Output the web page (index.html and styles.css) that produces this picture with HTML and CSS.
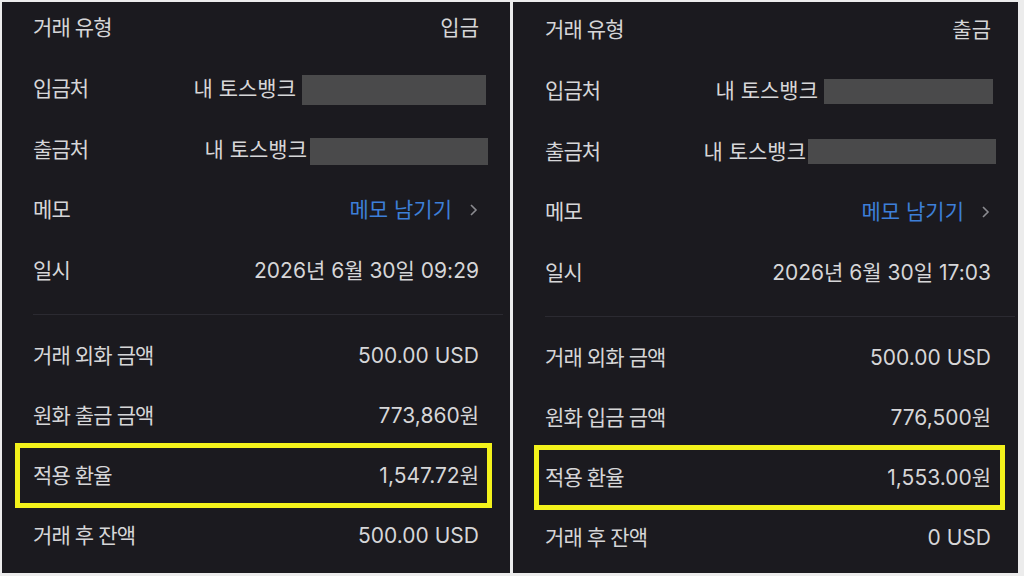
FILE: index.html
```html
<!DOCTYPE html>
<html lang="ko">
<head>
    <meta charset="UTF-8">
    <meta name="viewport" content="width=device-width, initial-scale=1.0">
    <title>거래 상세</title>
    <link rel="stylesheet" href="styles.css">
</head>
<body>
    <div class="sheet">
        <!-- 입금 거래 -->
        <section class="panel panel-in">
            <div class="details">
                <div class="row">
                    <span class="label">거래 유형</span>
                    <span class="value">입금</span>
                </div>
                <div class="row">
                    <span class="label">입금처</span>
                    <span class="value">내 토스뱅크<span class="mask mask-in-to"></span></span>
                </div>
                <div class="row">
                    <span class="label">출금처</span>
                    <span class="value">내 토스뱅크<span class="mask mask-in-from"></span></span>
                </div>
                <div class="row">
                    <span class="label">메모</span>
                    <span class="value memo">메모 남기기
                        <svg class="chevron" width="9" height="14" viewBox="0 0 9 14"><polyline points="2,2 7,7 2,12" /></svg>
                    </span>
                </div>
                <div class="row">
                    <span class="label">일시</span>
                    <span class="value">2026년 6월 30일 09:29</span>
                </div>
            </div>
            <hr class="divider">
            <div class="amounts">
                <div class="row">
                    <span class="label">거래 외화 금액</span>
                    <span class="value">500.00 USD</span>
                </div>
                <div class="row">
                    <span class="label">원화 출금 금액</span>
                    <span class="value">773,860원</span>
                </div>
                <div class="row highlight">
                    <span class="label">적용 환율</span>
                    <span class="value">1,547.72원</span>
                </div>
                <div class="row">
                    <span class="label">거래 후 잔액</span>
                    <span class="value">500.00 USD</span>
                </div>
            </div>
        </section>

        <!-- 출금 거래 -->
        <section class="panel panel-out">
            <div class="details">
                <div class="row">
                    <span class="label">거래 유형</span>
                    <span class="value">출금</span>
                </div>
                <div class="row">
                    <span class="label">입금처</span>
                    <span class="value">내 토스뱅크<span class="mask mask-out-to"></span></span>
                </div>
                <div class="row">
                    <span class="label">출금처</span>
                    <span class="value">내 토스뱅크<span class="mask mask-out-from"></span></span>
                </div>
                <div class="row">
                    <span class="label">메모</span>
                    <span class="value memo">메모 남기기
                        <svg class="chevron" width="9" height="14" viewBox="0 0 9 14"><polyline points="2,2 7,7 2,12" /></svg>
                    </span>
                </div>
                <div class="row">
                    <span class="label">일시</span>
                    <span class="value">2026년 6월 30일 17:03</span>
                </div>
            </div>
            <hr class="divider">
            <div class="amounts">
                <div class="row">
                    <span class="label">거래 외화 금액</span>
                    <span class="value">500.00 USD</span>
                </div>
                <div class="row">
                    <span class="label">원화 입금 금액</span>
                    <span class="value">776,500원</span>
                </div>
                <div class="row highlight">
                    <span class="label">적용 환율</span>
                    <span class="value">1,553.00원</span>
                </div>
                <div class="row">
                    <span class="label">거래 후 잔액</span>
                    <span class="value">0 USD</span>
                </div>
            </div>
        </section>
    </div>
</body>
</html>
```

FILE: styles.css
```css
* {
    box-sizing: border-box;
}
body {
    margin: 0;
    background-color: #ececec;
}
.sheet {
    display: flex;
    gap: 3px;
    height: 576px;
    padding: 2px 6px 3px 2px;
}
.panel {
    background-color: #1b1a1f;
    color: #d6d6d8;
    font-family: Inter, "Noto Sans CJK KR", sans-serif;
    font-size: 21px;
}
.panel-in {
    width: 508px;
    padding: 0 31px;
}
.panel-out {
    flex: 1;
    padding: 2px 27px 0 32px;
}
.row {
    position: relative;
    display: flex;
    justify-content: space-between;
    align-items: flex-start;
    padding-top: 14px;
    line-height: 24px;
}
.details .row {
    height: 60.75px;
}
.amounts .row {
    height: 60px;
}
.label {
    letter-spacing: -0.9px;
}
.value {
    display: flex;
    align-items: center;
    height: 24px;
}
.divider {
    border: none;
    border-top: 1px solid #2b2a31;
    margin: 8px -24px 15px 0;
}

/* 가려진 계좌번호 */
.mask {
    display: inline-block;
    background-color: #4a4a4b;
}
.mask-in-to {
    width: 184px;
    height: 30px;
    margin: 2px -7px 0 6px;
}
.mask-in-from {
    width: 178px;
    height: 27px;
    margin: 3px -9px 0 3px;
}
.mask-out-to {
    width: 169px;
    height: 25px;
    margin: 2px -2px 0 6px;
}
.mask-out-from {
    width: 188px;
    height: 25px;
    margin: 0 -5px 0 2px;
}

.memo {
    color: #3d7fd8;
}
.chevron {
    margin-left: 17px;
    margin-right: 1px;
    fill: none;
    stroke: #8b8b90;
    stroke-width: 1.6;
}

/* 노란 강조 테두리 */
.highlight::after {
    content: "";
    position: absolute;
    top: -7px;
    bottom: 2px;
    border: 5px solid #f3f21b;
}
.panel-in .highlight::after {
    left: -18px;
    right: -13px;
}
.panel-out .highlight::after {
    left: -11px;
    right: -14px;
}
```
